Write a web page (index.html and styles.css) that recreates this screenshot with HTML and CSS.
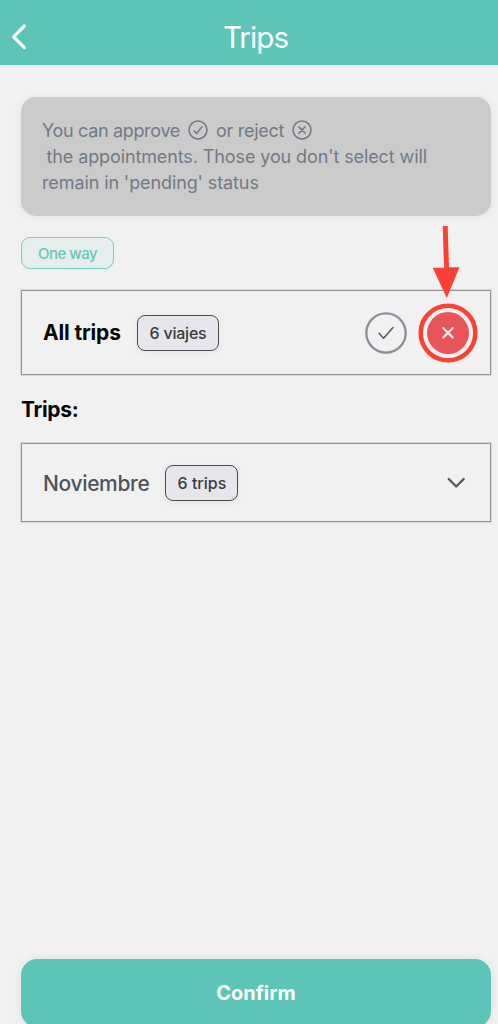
FILE: index.html
```html
<!DOCTYPE html>
<html lang="en">
<head>
<meta charset="utf-8">
<title>Trips</title>
<link rel="stylesheet" href="styles.css">
</head>
<body>
<div class="screen">
  <header class="header">
    <svg class="back" width="18" height="28" viewBox="0 0 18 28"><path d="M15.4 3 4.6 13.8l10.8 10.8"/></svg>
    <h1 class="title">Trips</h1>
  </header>
  <main class="content">
    <section class="info">
      <p class="info-line"><span class="t-approve">You can approve</span>
        <svg class="mark" width="20" height="20" viewBox="0 0 20 20"><circle cx="10" cy="10" r="9"/><path d="m6 10.8 2.5 2.7L14 6.7"/></svg>
        <span class="t-reject">or reject</span>
        <svg class="mark" width="20" height="20" viewBox="0 0 20 20"><circle cx="10" cy="10" r="9"/><path d="m6.9 6.9 6.2 6.2m0-6.2-6.2 6.2"/></svg>
      </p>
      <p class="info-line indented">the appointments. Those you don't select will</p>
      <p class="info-line">remain in 'pending' status</p>
    </section>
    <div class="direction">One way</div>
    <section class="row all">
      <h2 class="all-title">All trips</h2>
      <span class="count count-all">6 viajes</span>
      <div class="actions">
        <svg class="accept" width="42" height="42" viewBox="0 0 42 42"><circle cx="21" cy="21" r="19.7"/><path d="m14.2 21.3 4.3 5 9.6-10.8"/></svg>
        <div class="reject">
          <svg width="60" height="60" viewBox="0 0 60 60"><circle class="ring" cx="30" cy="30" r="27.3"/><circle class="disc" cx="30" cy="30" r="21"/><path d="m25.4 25.2 9.2 9.2m0-9.2-9.2 9.2"/></svg>
          <svg class="arrow" width="28" height="74" viewBox="0 0 28 74"><path d="M10.7 1h5L17 42.2h10.5L14.8 73 .7 42.7H12z"/></svg>
        </div>
      </div>
    </section>
    <h2 class="subtitle">Trips:</h2>
    <section class="row month">
      <h3 class="month-title">Noviembre</h3>
      <span class="count count-month">6 trips</span>
      <svg class="chevron" width="20" height="14" viewBox="0 0 20 14"><path d="m2.7 3 7.5 7.5L17.7 3"/></svg>
    </section>
    <button class="confirm">Confirm</button>
  </main>
</div>
</body>
</html>
```
FILE: styles.css
```css
* { box-sizing: border-box; }
body {
  margin: 0;
  background: #f1f1f1;
  font-family: Inter, "Liberation Sans", sans-serif;
  color: #050505;
}
h1, h2, h3, p { margin: 0; }
svg { flex: none; fill: none; stroke-linecap: round; stroke-linejoin: round; }
.screen { height: 1024px; overflow: hidden; display: flex; flex-direction: column; }
.header {
  height: 65px;
  flex: none;
  display: grid;
  grid-template-columns: 30px 1fr 26px;
  align-items: center;
  padding: 8px 0 0 9px;
  background: #5dc5b8;
}
.back { stroke: #fff; stroke-width: 3.2; }
.title { text-align: center; font-size: 29.5px; line-height: 36px; font-weight: 400; letter-spacing: -.9px; color: #fff; }
.content { flex: 1; display: flex; flex-direction: column; padding: 32px 7px 0 21px; }
.info {
  height: 119px;
  flex: none;
  padding: 20px 21px;
  border-radius: 15px;
  background: #cbcbcb;
  box-shadow: 0 1px 8px rgba(0, 0, 0, .06);
  color: #727985;
  font-size: 18px;
  letter-spacing: -.11px;
}
.info-line { display: flex; align-items: center; height: 26px; white-space: nowrap; }
.indented { padding-left: 4.5px; }
.t-approve { letter-spacing: -.33px; }
.t-reject { letter-spacing: -.27px; }
.mark { stroke: #727985; stroke-width: 1.5; margin: 0 8px; }
.direction {
  display: flex;
  align-items: center;
  justify-content: center;
  flex: none;
  width: 93px;
  height: 32px;
  margin-top: 21px;
  border: 1.5px solid #78cfc3;
  border-radius: 9px;
  background: #e4eeec;
  color: #66c5b9;
  font-size: 15px;
  font-weight: 500;
  letter-spacing: -.5px;
}
.row {
  display: flex;
  align-items: center;
  flex: none;
  border: 1px solid #959595;
  outline: 1px solid rgba(146, 146, 146, .25);
  padding: 0 14px 0 21px;
}
.all { height: 85px; margin-top: 21px; }
.month { height: 79px; padding-right: 24.5px; }
.all-title { width: 78px; white-space: nowrap; font-size: 21px; font-weight: 700; letter-spacing: -.15px; }
.month-title { padding-top: 1px; font-size: 21px; font-weight: 500; letter-spacing: -.35px; color: #4c535c; }
.count {
  display: flex;
  align-items: center;
  justify-content: center;
  height: 36px;
  margin-left: 16px;
  border: 1.5px solid #4b4b4e;
  border-radius: 8px;
  background: #e7e6ec;
  box-shadow: 0 2px 6px rgba(0, 0, 0, .05);
  color: #3b3b3e;
  font-size: 16px;
  font-weight: 500;
}
.count-all { width: 82px; letter-spacing: -.2px; }
.count-month { width: 73px; }
.actions { display: flex; align-items: center; gap: 11px; margin-left: auto; margin-right: -1.6px; }
.accept circle { stroke: #8b8f9c; stroke-width: 2.3; }
.accept path { stroke: #55575b; stroke-width: 1.5; }
.reject { position: relative; width: 60px; height: 60px; }
.ring { stroke: #fd4036; stroke-width: 4.5; }
.disc { fill: #e95459; }
.reject path { stroke: #fbe9e9; stroke-width: 2.2; }
.reject .arrow { position: absolute; left: 14px; top: -78px; }
.reject .arrow path { fill: #fd4036; stroke: none; }
.subtitle { margin: 21px 0 20px; font-size: 21px; line-height: 27px; font-weight: 700; letter-spacing: -.3px; }
.chevron { margin-left: auto; stroke: #555965; stroke-width: 2.4; }
.confirm {
  height: 68px;
  flex: none;
  margin: auto 0 -3px;
  border: 0;
  border-radius: 16px;
  background: #5dc5b8;
  box-shadow: 0 0 10px rgba(0, 0, 0, .07);
  color: #fff;
  font: 700 20px Inter, "Liberation Sans", sans-serif;
}
```
